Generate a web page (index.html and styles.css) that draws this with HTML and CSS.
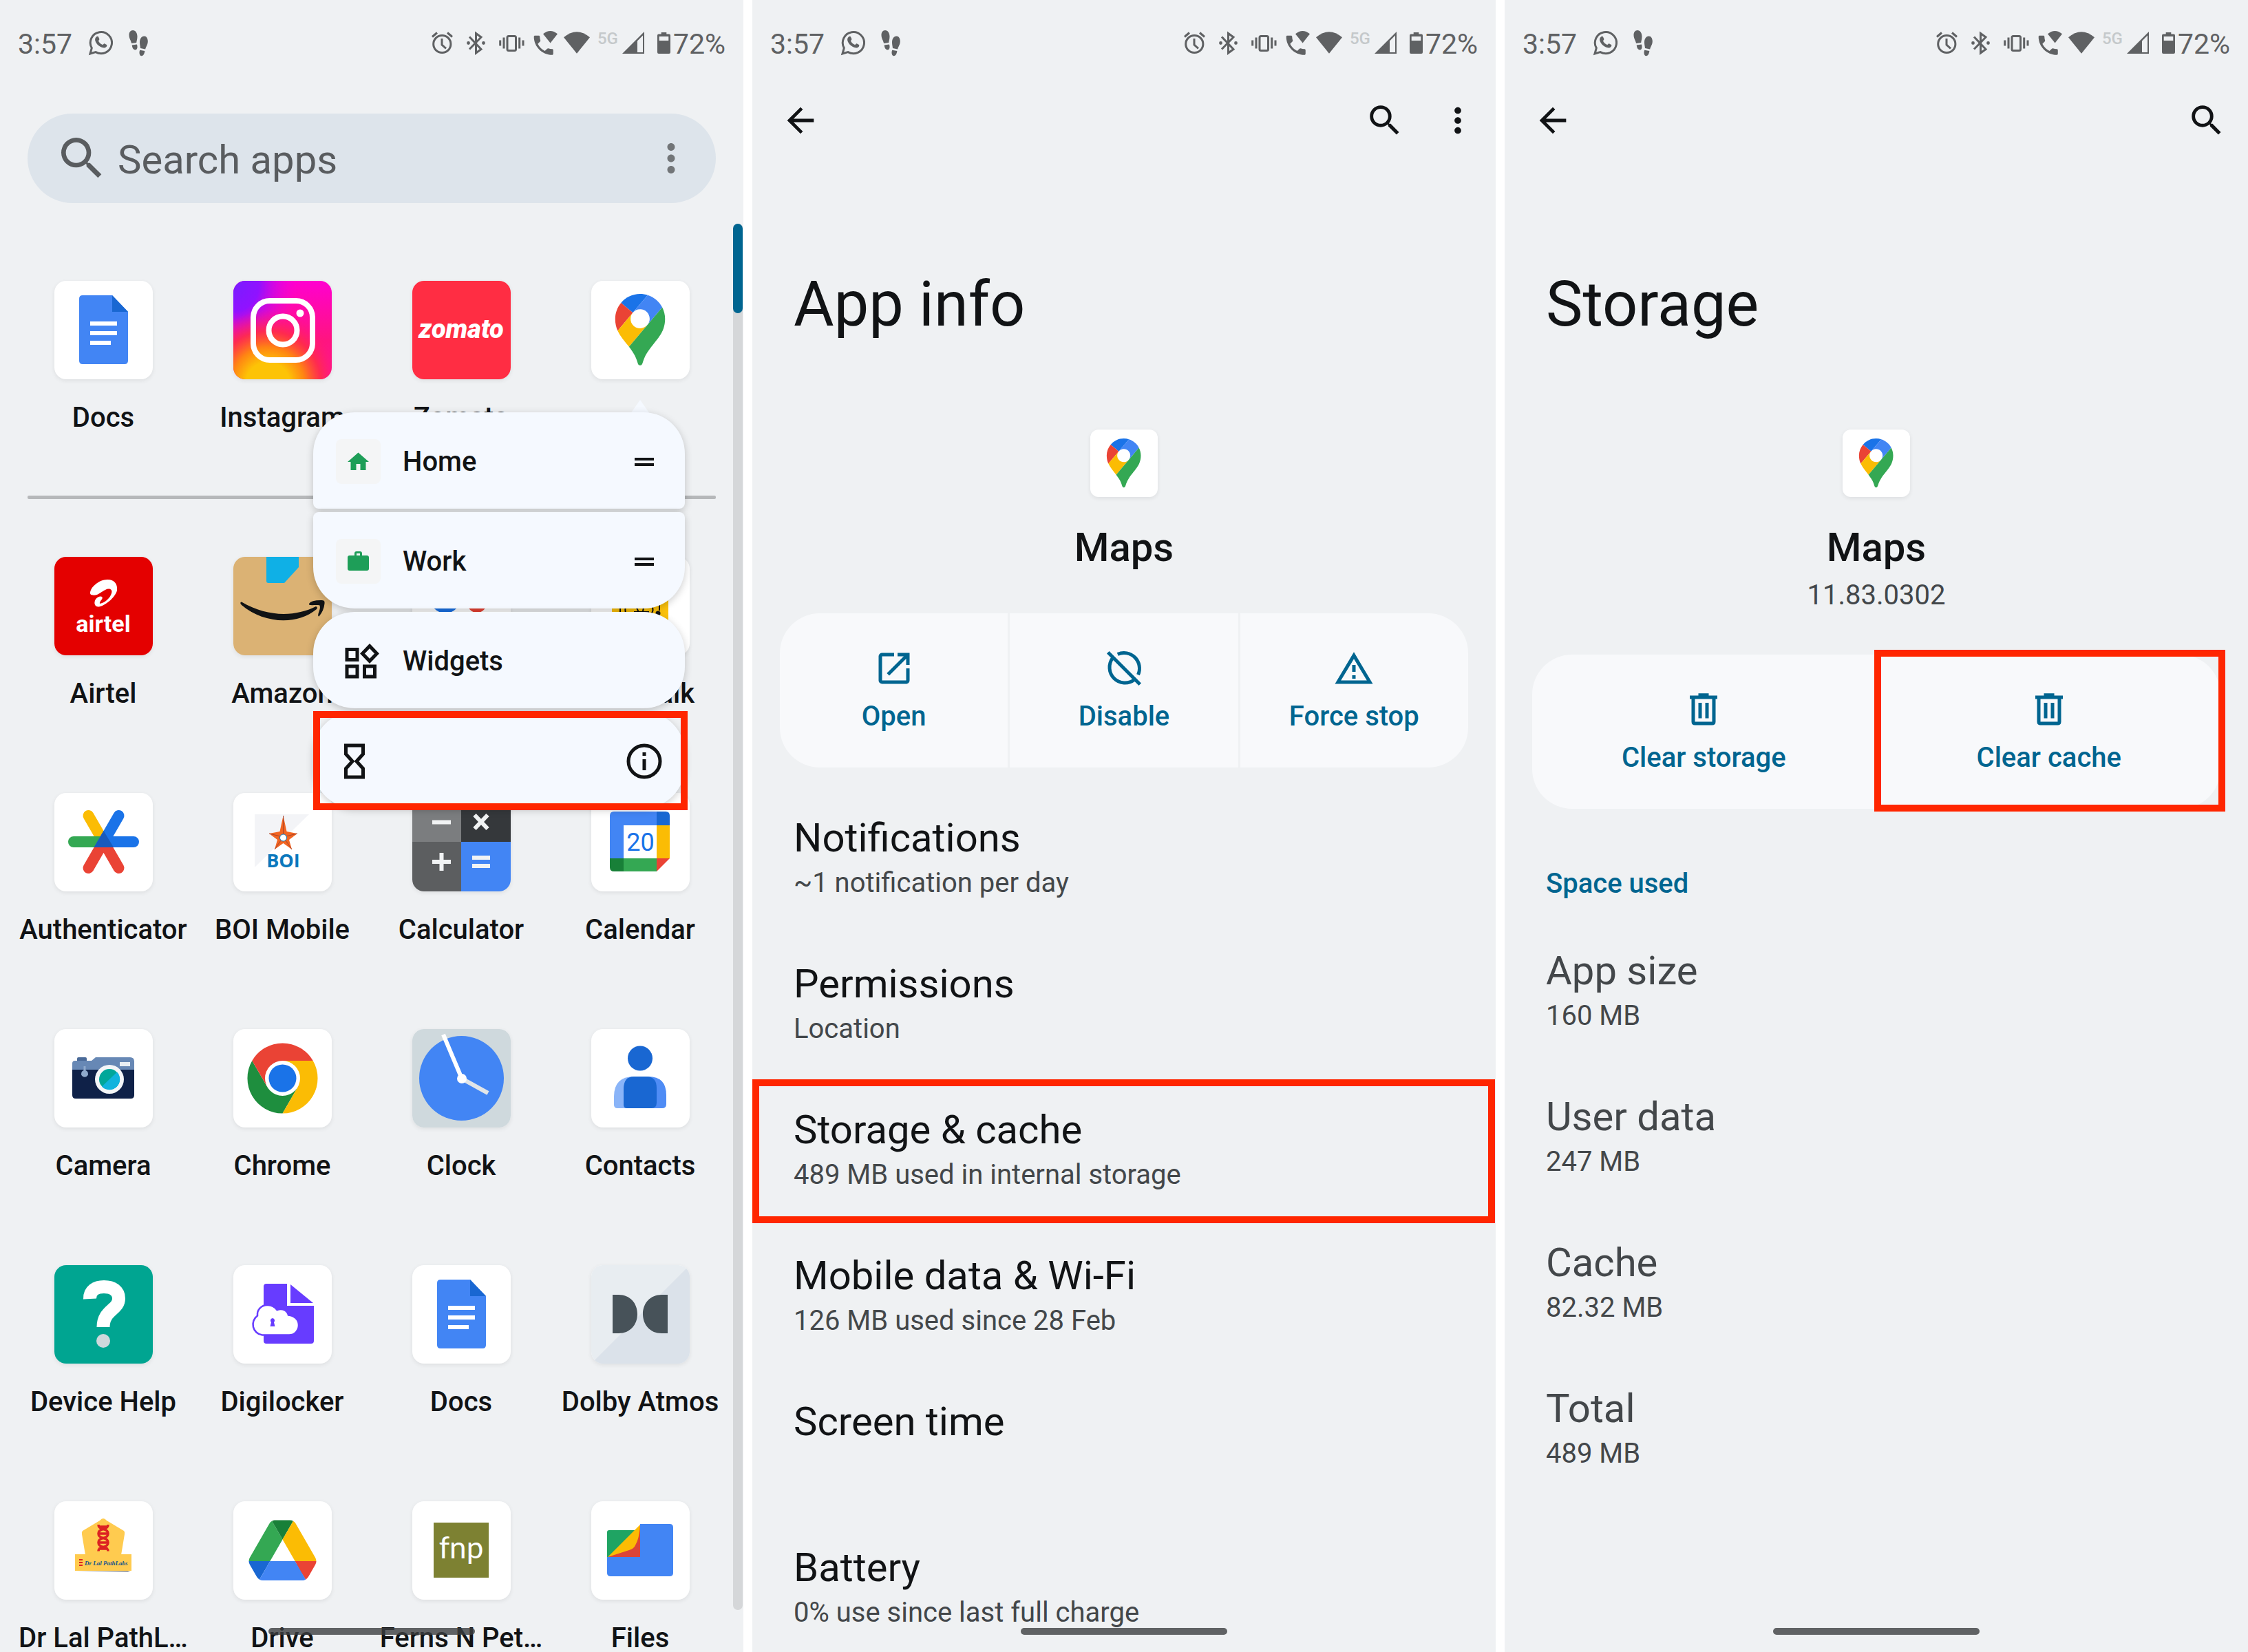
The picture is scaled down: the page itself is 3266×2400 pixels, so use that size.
FILE: index.html
```html
<!DOCTYPE html>
<html lang="en">
<head>
    <meta charset="utf-8">
    <title>Clear Maps cache</title>
    <meta name="viewport" content="width=device-width, initial-scale=1">
    <link rel="stylesheet" href="styles.css">
</head>

<body>

    <!-- shared icons -->
    <svg class="sprite" aria-hidden="true">
        <symbol id="whatsapp" viewBox="0 0 36 40">
            <path d="M3 36l2.3-8.2A15.6 15.6 0 1 1 11 33.6z" fill="none" stroke="#5f6163" stroke-width="3"/>
            <path d="M12 11.500c1-1 2.600-1 3.100.2l1.300 3c.3.8-1.600 2.400-1.300 3 1.400 2.600 3.200 4.200 5.800 5.300.8.3 2-2 2.800-1.700l3.200 1.600c.8.5.4 2.300-.6 3.300-2 2-5 1.600-8.700-.4-3.200-1.800-5.800-4.700-7-7.800-1-2.700-.4-5 1.400-6.500z" fill="#5f6163"/>
        </symbol>
        <symbol id="steps" viewBox="0 0 28 40">
            <g fill="#5f6163">
                <path d="M6 2c4 0 6.500 4 6.500 9 0 4-1 6-1.300 9L4 21C3.500 17 .5 14 .5 9 .5 5 2.500 2 6 2z"/>
                <path d="M4.800 23.500l7-1c1.500 3 .8 8-2.300 8s-4.700-4-4.700-7z"/>
                <path d="M22.500 10.500c-4 0-6.500 4-6.500 9 0 3 .7 5.500 1 8.500l7.200 1.500c.6-3.500 3.600-6.500 3.600-11.500 0-4-2-7.500-5.300-7.500z"/>
                <path d="M23.300 32l-7-1.300c-1.500 3-.9 8.300 2.200 8.500s4.700-4.200 4.800-7.200z"/>
            </g>
        </symbol>
        <symbol id="alarm" viewBox="0 0 44 40">
            <g fill="none" stroke="#5f6163" stroke-width="3">
                <circle cx="16.300" cy="22" r="12.600"/>
                <path d="M16 14v9l6 5.500M2 11.500l7-6M24 5.500l7 6"/>
            </g>
        </symbol>
        <symbol id="bluetooth" viewBox="0 0 39 40">
            <path d="M4 11.500l17 18-7.500 5.500V6.500l7.500 5.500L4 29.500" fill="none" stroke="#5f6163" stroke-width="3"/>
            <circle cx="2.500" cy="20.500" r="2.400" fill="#5f6163"/>
            <circle cx="24.500" cy="20.500" r="2.400" fill="#5f6163"/>
        </symbol>
        <symbol id="vibrate" viewBox="0 0 42 40">
            <path d="M1.700 16.500v8M7 12.500v16M29.700 12.500v16M35 16.500v8" stroke="#5f6163" stroke-width="3"/>
            <rect x="12" y="10.500" width="12.500" height="21" rx="2" fill="none" stroke="#5f6163" stroke-width="3"/>
        </symbol>
        <symbol id="wificall" viewBox="0 0 36 40">
            <path transform="translate(-4 5) scale(1.560)" d="M20 15.500c-1.250 0-2.450-.2-3.570-.57a1.020 1.020 0 0 0-1.020.24l-2.200 2.200a15.045 15.045 0 0 1-6.590-6.590l2.200-2.210c.28-.26.36-.65.25-1C8.700 6.450 8.500 5.250 8.500 4c0-.55-.45-1-1-1H4c-.55 0-1 .45-1 1 0 9.390 7.610 17 17 17 .55 0 1-.45 1-1v-3.500c0-.55-.45-1-1-1z" fill="#5f6163"/>
            <path d="M14 7.300q10.500-8.500 21 0L24.600 20.400z" fill="#5f6163"/>
        </symbol>
        <symbol id="wifi" viewBox="0 0 41 40">
            <path d="M0 12.300Q19-4 38 12.300L19 35.800z" fill="#5f6163"/>
        </symbol>
        <symbol id="signal" viewBox="0 0 43 40">
            <path d="M32 4v32H0zM30 9.500l-8 8V34h8z" fill="#5f6163" fill-rule="evenodd"/>
        </symbol>
        <symbol id="battery" viewBox="0 0 19 40">
            <path d="M5.700 5h7.600v2.500H17q2 0 2 2V34q0 2-2 2H2q-2 0-2-2V9.500q0-2 2-2h3.700zM2.700 11v6h13.600v-6z" fill="#5f6163" fill-rule="evenodd"/>
        </symbol>
        <symbol id="search" viewBox="0 0 24 24">
            <path d="M15.500 14h-.79l-.28-.27A6.470 6.470 0 0 0 16 9.500 6.500 6.500 0 1 0 9.500 16c1.610 0 3.090-.59 4.230-1.570l.27.28v.79l5 4.990L20.490 19l-4.990-5zm-6 0C7.010 14 5 11.990 5 9.500S7.010 5 9.500 5 14 7.010 14 9.500 11.990 14 9.500 14z" fill="currentColor"/>
        </symbol>
        <symbol id="dots" viewBox="0 0 24 24">
            <path d="M12 8c1.100 0 2-.9 2-2s-.9-2-2-2-2 .9-2 2 .9 2 2 2zm0 2c-1.100 0-2 .9-2 2s.9 2 2 2 2-.9 2-2-.9-2-2-2zm0 6c-1.100 0-2 .9-2 2s.9 2 2 2 2-.9 2-2-.9-2-2-2z" fill="currentColor"/>
        </symbol>
        <symbol id="back" viewBox="0 0 24 24">
            <path d="M20 11H7.830l5.590-5.590L12 4l-8 8 8 8 1.410-1.410L7.830 13H20v-2z" fill="currentColor"/>
        </symbol>
        <symbol id="trash" viewBox="0 0 24 24">
            <path d="M4 5V3.800h5V2.500h6v1.300h5V5.800h-1V19q0 2-2 2H7q-2 0-2-2V5.800H4zM7 5.800V19h10V5.800zM9 8h2v9H9zM13 8h2v9h-2z" fill="currentColor" fill-rule="evenodd"/>
        </symbol>
        <symbol id="maps" viewBox="0 0 143 143">
            <g transform="translate(34.800 19) scale(.784)">
                <path fill="#1a73e8" d="M60.200 2.200C55.800.8 51 0 46.100 0 32 0 19.300 6.400 10.800 16.500l21.800 18.300L60.200 2.200z"/>
                <path fill="#ea4335" d="M10.800 16.500C4.100 24.500 0 34.900 0 46.100c0 8.700 1.700 15.700 4.600 22l28-33.300-21.800-18.300z"/>
                <path fill="#4285f4" d="M46.200 28.500c9.800 0 17.700 7.900 17.700 17.700 0 4.300-1.600 8.300-4.200 11.400 0 0 13.900-16.600 27.500-32.700-5.600-10.800-15.300-19-27-22.700L32.600 34.800c3.300-3.800 8.100-6.300 13.600-6.300"/>
                <path fill="#fbbc04" d="M46.200 63.800c-9.800 0-17.700-7.900-17.700-17.700 0-4.300 1.500-8.300 4.100-11.300l-28 33.300c4.800 10.600 12.800 19.200 21 29.900l34.100-40.500c-3.300 3.900-8.100 6.300-13.500 6.300"/>
                <path fill="#34a853" d="M59.100 109.200c15.400-24.100 33.300-35 33.300-63 0-7.700-1.900-14.900-5.200-21.300L25.600 98c2.600 3.400 5.300 7.300 7.900 11.300 9.400 14.500 6.800 23.100 12.800 23.100s3.400-8.700 12.800-23.200"/>
            </g>
        </symbol>
        <symbol id="docs" viewBox="0 0 143 143">
            <path d="M41 21h43l23 24v71q0 5-5 5H41q-5 0-5-5V26q0-5 5-5z" fill="#4285f4"/>
            <path d="M84 21l23 24H84z" fill="#1967d2"/>
            <path d="M52 59h39v6H52zM52 73h39v6H52zM52 87h30v6H52z" fill="#fff"/>
        </symbol>
    </svg>

    <div class="screens">

        <!-- App drawer -->
        <section class="screen drawer">
            <div class="status">
                <span class="status-text">3:57</span>
                <svg width="36" height="40"><use href="#whatsapp"/></svg>
                <svg width="28" height="40"><use href="#steps"/></svg>
                <div class="status-right">
                    <svg width="44" height="40"><use href="#alarm"/></svg>
                    <svg width="39" height="40"><use href="#bluetooth"/></svg>
                    <svg width="42" height="40"><use href="#vibrate"/></svg>
                    <svg width="36" height="40"><use href="#wificall"/></svg>
                    <svg width="41" height="40"><use href="#wifi"/></svg>
                    <span class="net">5G</span>
                    <svg width="43" height="40"><use href="#signal"/></svg>
                    <span class="power"><svg width="19" height="40"><use href="#battery"/></svg><span class="status-text">72%</span></span>
                </div>
            </div>

            <form class="search">
                <label for="q"><svg class="search-icon"><use href="#search"/></svg></label>
                <input type="text" id="q" name="q" placeholder="Search apps">
                <button type="button" aria-label="More options"><svg class="more-icon"><use href="#dots"/></svg></button>
            </form>

            <div class="apps">
                <a class="app" href="#">
                    <svg class="tile" viewBox="0 0 143 143"><use href="#docs"/></svg>
                    <span>Docs</span>
                </a>
                <a class="app" href="#">
                    <svg class="tile" viewBox="0 0 143 143">
                        <defs>
                            <linearGradient id="ig1" x1="0" y1="0" x2="0" y2="1">
                                <stop offset="0" stop-color="#ff00d0"/>
                                <stop offset=".6" stop-color="#ff1480"/>
                                <stop offset="1" stop-color="#ff1595"/>
                            </linearGradient>
                            <radialGradient id="ig2" cx=".35" cy="1.050" r=".75">
                                <stop offset=".3" stop-color="#fdc306"/>
                                <stop offset=".5" stop-color="#ff8413"/>
                                <stop offset=".72" stop-color="#ff3040" stop-opacity=".8"/>
                                <stop offset="1" stop-color="#ff1480" stop-opacity="0"/>
                            </radialGradient>
                            <radialGradient id="ig3" cx="0" cy=".05" r=".65">
                                <stop offset="0" stop-color="#7a1cff"/>
                                <stop offset=".4" stop-color="#9012ff"/>
                                <stop offset="1" stop-color="#f000e0" stop-opacity="0"/>
                            </radialGradient>
                        </defs>
                        <rect width="143" height="143" fill="url(#ig1)"/>
                        <rect width="143" height="143" fill="url(#ig3)"/>
                        <rect width="143" height="143" fill="url(#ig2)"/>
                        <g fill="none" stroke="#fff" stroke-width="8">
                            <rect x="29" y="29" width="86" height="86" rx="24"/>
                            <circle cx="72" cy="72" r="20.500"/>
                        </g>
                        <circle cx="97" cy="47" r="5.500" fill="#fff"/>
                    </svg>
                    <span>Instagram</span>
                </a>
                <a class="app" href="#">
                    <svg class="tile" viewBox="0 0 143 143">
                        <rect width="143" height="143" fill="#ff2d43"/>
                        <text x="71" y="83" text-anchor="middle" class="zomato-text">zomato</text>
                    </svg>
                    <span>Zomato</span>
                </a>
                <div class="app">
                    <svg class="tile" viewBox="0 0 143 143" role="img" aria-label="Maps"><use href="#maps"/></svg>

                    <!-- long press menu -->
                    <div class="popup">
                        <button type="button" class="first">
                            <svg class="chip" viewBox="0 0 65 65">
                                <path d="M32.500 19.500L48 33h-4.500v12h-8v-9h-6v9h-8V33H17z" fill="#1e9e58"/>
                            </svg>
                            <span>Home</span>
                            <svg class="handle" viewBox="0 0 28 12"><path d="M0 2h28M0 10h28" stroke="#111315" stroke-width="4"/></svg>
                        </button>
                        <button type="button" class="second">
                            <svg class="chip" viewBox="0 0 65 65">
                                <path d="M20 24h7v-3q0-3 3-3h5q3 0 3 3v3h7q3 0 3 3v16q0 3-3 3H20q-3 0-3-3V27q0-3 3-3zm10 0h5v-3h-5z" fill="#1e9e58" fill-rule="evenodd"/>
                            </svg>
                            <span>Work</span>
                            <svg class="handle" viewBox="0 0 28 12"><path d="M0 2h28M0 10h28" stroke="#111315" stroke-width="4"/></svg>
                        </button>
                        <button type="button">
                            <svg class="plain" viewBox="0 0 65 65">
                                <path d="M16 15.500h15v15H16zM16 40h15v15H16zM41.500 40h15v15h-15z M49 10.500l10.500 11L49 32.500 38.500 21.500z" fill="none" stroke="#111315" stroke-width="5"/>
                            </svg>
                            <span>Widgets</span>
                        </button>
                        <button type="button" aria-label="App info">
                            <svg class="plain" viewBox="0 0 65 65">
                                <path d="M14.500 10h25v12.500L30 33l9.500 10.500V56h-25V43.500L24 33l-9.500-10.500z" fill="none" stroke="#111315" stroke-width="5"/>
                            </svg>
                            <svg class="info" viewBox="0 0 52 52">
                                <circle cx="26" cy="26" r="23" fill="none" stroke="#111315" stroke-width="5"/>
                                <path d="M26 13v5M26 23v16" stroke="#111315" stroke-width="5"/>
                            </svg>
                            <span class="mark"></span>
                        </button>
                    </div>
                </div>
            </div>

            <hr>

            <div class="apps">
                <a class="app" href="#">
                    <svg class="tile" viewBox="0 0 143 143">
                        <rect width="143" height="143" fill="#e40000"/>
                        <path d="M52 53C52 44 65 33 77 33c11 0 15 7 14 16C88 60 73 71 65 72.500c-7 .5-8-6-5-11 3-4 8-5 9.500-3 1.500 3-4.500 6-3.500 9.500C73 67 81 60 83 53c2-6-3-8-9-5S62 57 56 55.500C53 55.500 52 54 52 53z" fill="#fff"/>
                        <text x="71" y="109" text-anchor="middle" class="airtel-text">airtel</text>
                    </svg>
                    <span>Airtel</span>
                </a>
                <a class="app" href="#">
                    <svg class="tile" viewBox="0 0 143 143">
                        <rect width="143" height="143" fill="#dbb274"/>
                        <path d="M48 0h47v15L74 38H51q-3 0-3-3z" fill="#0fb0e6"/>
                        <path d="M10.500 66Q9.500 68 12 70c32 27 80 30 109 6q2-3-1-4C90 87 50 88 12 65.500z" fill="#111315"/>
                        <path d="M110 68q3-5 17-5c5 0 6 1 5.500 5q-1 10-8 18.500-2 0-1-4c2-6 3-8 2-12-4-1-9 0-15-.5z" fill="#111315"/>
                    </svg>
                    <span>Amazon</span>
                </a>
                <a class="app" href="#">
                    <svg class="tile" viewBox="0 0 143 143">
                        <circle cx="48" cy="60" r="22" fill="#1a73e8"/>
                        <circle cx="94" cy="67" r="14" fill="#ea4335"/>
                    </svg>
                    <span>Assistant</span>
                </a>
                <a class="app" href="#">
                    <svg class="tile" viewBox="0 0 143 143">
                        <rect x="30" y="30" width="82" height="82" fill="#fcc20c"/>
                        <path d="M42 73v10M50 73q-2 6 2 12M62 80h22M66 74l4 9M76 74l-2 10M88 72q4 6-2 12M99 70v8" stroke="#111315" stroke-width="2" fill="none"/>
                        <circle cx="97" cy="82" r="3.500" fill="#111315"/>
                    </svg>
                    <span>Cat Walk</span>
                </a>

                <a class="app" href="#">
                    <svg class="tile" viewBox="0 0 143 143">
                        <g stroke-width="16" stroke-linecap="round">
                            <path d="M71.500 71l-22 38M71.500 71l22 38" stroke="#ea4335"/>
                            <path d="M49.500 33l22 38" stroke="#fbbc04"/>
                            <path d="M28 71h43.500" stroke="#34a853"/>
                            <path d="M93.500 33l-22 38H115" stroke="#1a73e8" fill="none"/>
                        </g>
                        <path d="M71.500 55L86 79H57.500z" fill="#185abc"/>
                    </svg>
                    <span>Authenticator</span>
                </a>
                <a class="app" href="#">
                    <svg class="tile" viewBox="0 0 143 143">
                        <path d="M31 31h79L31 108z" fill="#f3f4f7"/>
                        <path d="M72.500 33l5 23 15.500 3-12 9 4 14-12.500-9L60 82l4-14-12-9 15.500-3z" fill="#f26522"/>
                        <path d="M72.500 33v31L52 59m20.500 5L60 82m12.500-18L85 82M72.500 64L93 59" stroke="#a8432a" stroke-width="1" fill="none"/>
                        <circle cx="72.500" cy="65" r="5" fill="#fff" stroke="#0b78bd"/>
                        <text x="72.500" y="108" text-anchor="middle" class="boi-text">BOI</text>
                    </svg>
                    <span>BOI Mobile</span>
                </a>
                <a class="app" href="#">
                    <svg class="tile" viewBox="0 0 143 143">
                        <rect width="71" height="71" fill="#7b7d7f"/>
                        <rect x="71" width="72" height="71" fill="#35383b"/>
                        <rect y="71" width="71" height="72" fill="#5c5e60"/>
                        <rect x="71" y="71" width="72" height="72" fill="#4285f4"/>
                        <path d="M29 42.500h27M29 100h27M42.500 87v26M87 94h26M87 106h26M90.500 32l19 20M109.500 32l-19 20" stroke="#f1f3f4" stroke-width="6"/>
                    </svg>
                    <span>Calculator</span>
                </a>
                <a class="app" href="#">
                    <svg class="tile" viewBox="0 0 143 143">
                        <path d="M33 27h62v20H47v48H27V33q0-6 6-6z" fill="#4285f4"/>
                        <path d="M95 27h13q6 0 6 6v14H95z" fill="#1967d2"/>
                        <path d="M95 47h19v48H95z" fill="#fbbc04"/>
                        <path d="M47 95h48v19H47z" fill="#34a853"/>
                        <path d="M27 95h20v19H33q-6 0-6-6z" fill="#188038"/>
                        <path d="M95 95h19l-19 19z" fill="#ea4335"/>
                        <text x="71.500" y="84" text-anchor="middle" class="cal-text">20</text>
                    </svg>
                    <span>Calendar</span>
                </a>

                <a class="app" href="#">
                    <svg class="tile" viewBox="0 0 143 143">
                        <path d="M33 46v-3q0-2 2-2h10q2 0 2 2v3z" fill="#4a6a98"/>
                        <path d="M30 46h24l6-5h50q6 0 6 6v14H26V50q0-4 4-4z" fill="#6788b5"/>
                        <path d="M26 59h90v37q0 5-5 5H31q-5 0-5-5z" fill="#0f2148"/>
                        <rect x="95" y="48" width="15" height="6" fill="#e8eef4"/>
                        <path d="M42.500 54h3v6a5 5 0 1 1-3 0z" fill="#8fa9cc"/>
                        <circle cx="80" cy="73" r="21" fill="#f4f6f8"/>
                        <circle cx="80" cy="73" r="15" fill="#00a79a"/>
                        <path d="M91 62.500a15 15 0 0 1-22 21z" fill="#10b3dd"/>
                    </svg>
                    <span>Camera</span>
                </a>
                <a class="app" href="#">
                    <svg class="tile" viewBox="0 0 143 143">
                        <path d="M27.300 46A51 51 0 0 0 71.500 122.500L93.600 84.200 49.400 84.200z" fill="#1e8e3e"/>
                        <path d="M71.500 46h44.200A51 51 0 0 1 71.500 122.500L93.600 84.200z" fill="#fbbc04"/>
                        <path d="M27.300 46A51 51 0 0 1 115.700 46H71.500L49.400 84.200z" fill="#ea4335"/>
                        <circle cx="71.500" cy="71.500" r="25.500" fill="#fff"/>
                        <circle cx="71.500" cy="71.500" r="20" fill="#1a73e8"/>
                    </svg>
                    <span>Chrome</span>
                </a>
                <a class="app" href="#">
                    <svg class="tile" viewBox="0 0 143 143">
                        <rect width="143" height="143" fill="#cfd9dd"/>
                        <circle cx="71.500" cy="71.500" r="61.500" fill="#4285f4"/>
                        <path d="M72 72l38 21" stroke="#e1e5e8" stroke-width="6"/>
                        <path d="M72 72L45 8" stroke="#fff" stroke-width="6"/>
                        <circle cx="72" cy="72" r="7" fill="#fff"/>
                    </svg>
                    <span>Clock</span>
                </a>
                <a class="app" href="#">
                    <svg class="tile" viewBox="0 0 143 143">
                        <path d="M62 69h10v46H38q-5 0-5-5V98q0-29 29-29z" fill="#8ab4f8"/>
                        <path d="M72 69h11q26 0 26 27v13q0 6-6 6H72z" fill="#4f8cf5"/>
                        <path d="M62 69h18q15 0 15 17v21q0 8-8 8H52q-5 0-5-5V87q0-18 15-18z" fill="#1967d2"/>
                        <circle cx="71" cy="42.500" r="18" fill="#1967d2"/>
                    </svg>
                    <span>Contacts</span>
                </a>

                <a class="app" href="#">
                    <svg class="tile" viewBox="0 0 143 143">
                        <rect width="143" height="143" fill="#00a591"/>
                        <path d="M51.500 49C51 37 60 31.500 72 31.500c13 0 21.500 6 21.500 17C93.500 65 71 65 71 90" fill="none" stroke="#fff" stroke-width="19"/>
                        <circle cx="71" cy="110" r="10" fill="#cfd8dc"/>
                    </svg>
                    <span>Device Help</span>
                </a>
                <a class="app" href="#">
                    <svg class="tile" viewBox="0 0 143 143">
                        <path d="M48 27h30v32h39v51q0 4-4 4H48q-4 0-4-4V31q0-4 4-4z" fill="#673cff"/>
                        <path d="M83 28l33 27H83z" fill="#673cff"/>
                        <path d="M42 101.500a15.500 15.500 0 0 1-7-28C34 64 42 57 50.500 58c6 0 10 3 13 7 8-3 15 1 16.500 7.500C88 73 95 79 95 87c0 8-6 14.500-14 14.500z" fill="#fff" stroke="#673cff" stroke-width="2.500"/>
                        <path d="M57 77a3.500 3.500 0 0 1 2 6l1.500 6h-7l1.500-6a3.500 3.500 0 0 1 2-6z" fill="#673cff"/>
                    </svg>
                    <span>Digilocker</span>
                </a>
                <a class="app" href="#">
                    <svg class="tile" viewBox="0 0 143 143"><use href="#docs"/></svg>
                    <span>Docs</span>
                </a>
                <a class="app" href="#">
                    <svg class="tile" viewBox="0 0 143 143">
                        <rect width="143" height="143" fill="#e8edf1"/>
                        <path d="M143 0v143H0z" fill="#dbe2ea"/>
                        <path d="M31 43h9c16 0 27 12 27 28s-11 28-27 28h-9zM111 43h-9c-16 0-27 12-27 28s11 28 27 28h9z" fill="#475259"/>
                    </svg>
                    <span>Dolby Atmos</span>
                </a>

                <a class="app" href="#">
                    <svg class="tile" viewBox="0 0 143 143">
                        <path d="M66 28q5-6 10 0l25 15q2 2 1 5l-5 30H45l-5-30q-1-3 1-5z" fill="#ffcb4f"/>
                        <path d="M31 101l8-2h64l7 4z" fill="#9c9fa2"/>
                        <rect x="30" y="77" width="82" height="24" fill="#ffcb4f"/>
                        <path d="M64 34q0 5 7 6.500t7 6.500-7 6.500-7 6.500 7 6.500 7 6M78 34q0 5-7 6.500T64 47t7 6.500 7 6.500-7 6.500-7 6M64 37h14M64 47h14M64 60h14M64 69h14" fill="none" stroke="#dc2222" stroke-width="3.500"/>
                        <path d="M36 85h5M36 89h5M36 93h5" stroke="#dc2222" stroke-width="2"/>
                        <text x="44" y="93" class="lal-text">Dr Lal PathLabs</text>
                    </svg>
                    <span>Dr Lal PathL…</span>
                </a>
                <a class="app" href="#">
                    <svg class="tile" viewBox="0 0 143 143">
                        <g transform="translate(22.500 27.500) scale(1.123)">
                            <path d="M6.600 66.850l3.850 6.650c.8 1.400 1.950 2.500 3.300 3.300l13.750-23.800H0c0 1.550.4 3.100 1.200 4.500z" fill="#1967d2"/>
                            <path d="M43.650 25L29.900 1.200c-1.350.8-2.500 1.900-3.300 3.300L1.200 48.500A9.060 9.060 0 0 0 0 53h27.500z" fill="#34a853"/>
                            <path d="M73.550 76.800c1.350-.8 2.500-1.900 3.300-3.300l1.600-2.750 7.650-13.250c.8-1.400 1.200-2.950 1.200-4.500H59.800l5.850 11.500z" fill="#ea4335"/>
                            <path d="M43.650 25L57.400 1.200C56.050.4 54.500 0 52.900 0H34.400c-1.600 0-3.150.45-4.500 1.200z" fill="#188038"/>
                            <path d="M59.800 53H27.500L13.750 76.800c1.350.8 2.900 1.200 4.500 1.200h50.800c1.600 0 3.150-.45 4.500-1.200z" fill="#4285f4"/>
                            <path d="M73.400 26.500L60.700 4.500c-.8-1.400-1.950-2.500-3.300-3.300L43.650 25 59.800 53h27.450c0-1.550-.4-3.100-1.200-4.500z" fill="#fbbc04"/>
                        </g>
                    </svg>
                    <span>Drive</span>
                </a>
                <a class="app" href="#">
                    <svg class="tile" viewBox="0 0 143 143">
                        <rect x="31" y="31" width="80" height="80" fill="#7d8132"/>
                        <text x="71" y="83" text-anchor="middle" class="fnp-text">fnp</text>
                    </svg>
                    <span>Ferns N Pet…</span>
                </a>
                <a class="app" href="#">
                    <svg class="tile" viewBox="0 0 143 143">
                        <path d="M26 42h45v40H23V45q0-3 3-3z" fill="#1fa463"/>
                        <path d="M71 33h43q5 0 5 5v66q0 5-5 5H28q-5 0-5-5V81h48z" fill="#4285f4"/>
                        <path d="M71 34v47H24l34-14z" fill="#db4437"/>
                        <path d="M71 34q-1 20-7 30-2 5-9 7L24 81z" fill="#fbbc04"/>
                    </svg>
                    <span>Files</span>
                </a>
            </div>

            <div class="scrollbar"><div class="thumb"></div></div>
            <div class="nav-pill"></div>
        </section>

        <!-- App info -->
        <section class="screen">
            <div class="status">
                <span class="status-text">3:57</span>
                <svg width="36" height="40"><use href="#whatsapp"/></svg>
                <svg width="28" height="40"><use href="#steps"/></svg>
                <div class="status-right">
                    <svg width="44" height="40"><use href="#alarm"/></svg>
                    <svg width="39" height="40"><use href="#bluetooth"/></svg>
                    <svg width="42" height="40"><use href="#vibrate"/></svg>
                    <svg width="36" height="40"><use href="#wificall"/></svg>
                    <svg width="41" height="40"><use href="#wifi"/></svg>
                    <span class="net">5G</span>
                    <svg width="43" height="40"><use href="#signal"/></svg>
                    <span class="power"><svg width="19" height="40"><use href="#battery"/></svg><span class="status-text">72%</span></span>
                </div>
            </div>

            <div class="toolbar">
                <button type="button" aria-label="Back"><svg><use href="#back"/></svg></button>
                <button type="button" aria-label="Search" class="push"><svg><use href="#search"/></svg></button>
                <button type="button" aria-label="More options"><svg><use href="#dots"/></svg></button>
            </div>

            <h1>App info</h1>

            <div class="app-head">
                <svg class="app-icon"><use href="#maps"/></svg>
                <h2>Maps</h2>
            </div>

            <div class="actions">
                <button type="button">
                    <svg viewBox="0 0 24 24"><path d="M19 19H5V5h7V3H5a2 2 0 0 0-2 2v14a2 2 0 0 0 2 2h14c1.100 0 2-.9 2-2v-7h-2v7zM14 3v2h3.590l-9.830 9.830 1.410 1.410L19 6.410V10h2V3h-7z" fill="currentColor"/></svg>
                    Open
                </button>
                <button type="button">
                    <svg viewBox="0 0 24 24"><path d="M8.300 3.800A9 9 0 0 1 20.200 15.700M18 18.600A9 9 0 0 1 5.400 6M2.700 2.700l18.600 18.600" fill="none" stroke="currentColor" stroke-width="2"/></svg>
                    Disable
                </button>
                <button type="button">
                    <svg viewBox="0 0 24 24"><path d="M12 6.490L19.530 19H4.470L12 6.490M12 2.500L1 21h22L12 2.500zM13 16h-2v2h2v-2zm0-6h-2v4h2v-4z" fill="currentColor"/></svg>
                    Force stop
                </button>
            </div>

            <ul class="list">
                <li><h3>Notifications</h3><p>~1 notification per day</p></li>
                <li><h3>Permissions</h3><p>Location</p></li>
                <li><h3>Storage &amp; cache</h3><p>489 MB used in internal storage</p><span class="mark"></span></li>
                <li><h3>Mobile data &amp; Wi-Fi</h3><p>126 MB used since 28 Feb</p></li>
                <li><h3>Screen time</h3></li>
                <li><h3>Battery</h3><p>0% use since last full charge</p></li>
            </ul>

            <div class="nav-pill"></div>
        </section>

        <!-- Storage -->
        <section class="screen">
            <div class="status">
                <span class="status-text">3:57</span>
                <svg width="36" height="40"><use href="#whatsapp"/></svg>
                <svg width="28" height="40"><use href="#steps"/></svg>
                <div class="status-right">
                    <svg width="44" height="40"><use href="#alarm"/></svg>
                    <svg width="39" height="40"><use href="#bluetooth"/></svg>
                    <svg width="42" height="40"><use href="#vibrate"/></svg>
                    <svg width="36" height="40"><use href="#wificall"/></svg>
                    <svg width="41" height="40"><use href="#wifi"/></svg>
                    <span class="net">5G</span>
                    <svg width="43" height="40"><use href="#signal"/></svg>
                    <span class="power"><svg width="19" height="40"><use href="#battery"/></svg><span class="status-text">72%</span></span>
                </div>
            </div>

            <div class="toolbar">
                <button type="button" aria-label="Back"><svg><use href="#back"/></svg></button>
                <button type="button" aria-label="Search" class="push"><svg><use href="#search"/></svg></button>
            </div>

            <h1>Storage</h1>

            <div class="app-head">
                <svg class="app-icon"><use href="#maps"/></svg>
                <h2>Maps</h2>
                <p>11.83.0302</p>
            </div>

            <div class="actions">
                <button type="button"><svg><use href="#trash"/></svg>Clear storage</button>
                <button type="button"><svg><use href="#trash"/></svg>Clear cache<span class="mark"></span></button>
            </div>

            <h4>Space used</h4>
            <ul class="list muted">
                <li><h3>App size</h3><p>160 MB</p></li>
                <li><h3>User data</h3><p>247 MB</p></li>
                <li><h3>Cache</h3><p>82.32 MB</p></li>
                <li><h3>Total</h3><p>489 MB</p></li>
            </ul>

            <div class="nav-pill"></div>
        </section>

    </div>
</body>
</html>
```

FILE: styles.css
```css
* {
    box-sizing: border-box;
    margin: 0;
    padding: 0;
}

body {
    background-color: #ffffff;
    font-family: Roboto, "Liberation Sans", sans-serif;
    font-size: 40px;
    line-height: 48px;
    color: #111315;
}

button {
    font: inherit;
    color: inherit;
    background: none;
    border: none;
    cursor: pointer;
}

svg {
    display: block;
    flex: none;
}

.sprite {
    position: absolute;
    width: 0;
    height: 0;
}

.screens {
    display: flex;
    gap: 13px;
    height: 100vh;
}

.screen {
    flex: 1;
    min-width: 0;
    position: relative;
    overflow: hidden;
    background-color: #eff1f3;
}

/* red highlight box */
.mark {
    position: absolute;
    border: 10px solid #ff2600;
    pointer-events: none;
}

/* status bar */
.status {
    display: flex;
    align-items: flex-start;
    gap: 23px;
    padding: 42px 26px 41px 26px;
    color: #5f6163;
}

.status-text {
    font-size: 41px;
    line-height: 44px;
}

.status-right {
    display: flex;
    align-items: flex-start;
    gap: 8px;
    margin-left: auto;
}

.power {
    display: flex;
    gap: 4px;
}

.net {
    width: 28px;
    font-size: 24px;
    line-height: 28px;
    font-weight: 500;
    color: #c5c9cb;
}

.nav-pill {
    position: absolute;
    bottom: 25px;
    left: 50%;
    width: 300px;
    height: 10px;
    margin-left: -150px;
    border-radius: 5px;
    background-color: rgba(60, 62, 64, 0.8);
}

/* app drawer */
.search {
    display: flex;
    align-items: center;
    height: 130px;
    margin: 38px 40px 113px;
    padding: 0 32px 0 39px;
    border-radius: 65px;
    background-color: #dde4eb;
    color: #595c5f;
}

.search-icon {
    width: 80px;
    height: 80px;
}

.search input {
    flex: 1;
    min-width: 0;
    margin-left: 12px;
    padding-top: 3px;
    border: none;
    outline: none;
    background: none;
    font: inherit;
    font-size: 58px;
    line-height: 68px;
    color: inherit;
}

.search input::placeholder {
    color: #595c5f;
    opacity: 1;
}

.more-icon {
    width: 66px;
    height: 66px;
    color: #727578;
}

.apps {
    display: grid;
    grid-template-columns: repeat(4, 1fr);
    row-gap: 124px;
    padding: 0 20px;
}

.app {
    position: relative;
    display: flex;
    flex-direction: column;
    align-items: center;
    gap: 36px;
    line-height: 40px;
    font-weight: 500;
    color: #111315;
    text-decoration: none;
    white-space: nowrap;
}

.tile {
    width: 143px;
    height: 143px;
    border-radius: 17px;
    background-color: #ffffff;
    box-shadow: 0 2px 6px rgba(0, 0, 0, 0.08);
}

hr {
    height: 5px;
    margin: 93px 40px 84px;
    border: none;
    border-radius: 2px;
    background-color: #b6b8ba;
}

.zomato-text {
    font: italic 900 38px Roboto, sans-serif;
    fill: #ffffff;
}

.airtel-text {
    font: bold 34px Roboto, sans-serif;
    fill: #ffffff;
}

.boi-text {
    font: bold 27px "Open Sans", sans-serif;
    fill: #0b78bd;
}

.cal-text {
    font: 36px Roboto, sans-serif;
    fill: #1a73e8;
}

.lal-text {
    font: italic bold 9px "Liberation Serif", serif;
    fill: #17558c;
}

.fnp-text {
    font: 44px Lato, sans-serif;
    fill: #ffffff;
}

.scrollbar {
    position: absolute;
    top: 325px;
    right: 1px;
    bottom: 61px;
    width: 14px;
    border-radius: 7px;
    background-color: #d5d7d9;
}

.thumb {
    height: 130px;
    border-radius: 7px;
    background-color: #006590;
}

/* long press menu */
.popup {
    position: absolute;
    z-index: 1;
    top: 191px;
    right: 65px;
    width: 540px;
    display: flex;
    flex-direction: column;
    gap: 5px;
}

.popup::before {
    content: "";
    position: absolute;
    top: -18px;
    right: 51px;
    width: 28px;
    height: 20px;
    background-color: #f5f9ff;
    clip-path: polygon(50% 0, 100% 100%, 0 100%);
}

.popup button {
    position: relative;
    display: flex;
    align-items: center;
    gap: 32px;
    height: 140px;
    padding: 3px 33px 0;
    border-radius: 60px;
    background-color: #f5f9ff;
    box-shadow: 0 3px 12px rgba(0, 0, 0, 0.2);
    font-weight: 500;
}

.popup .first {
    border-radius: 60px 60px 8px 8px;
}

.popup .second {
    border-radius: 8px 8px 60px 60px;
}

.chip,
.plain {
    width: 65px;
    height: 65px;
    border-radius: 8px;
}

.chip {
    background-color: #f4f5f6;
}

.handle {
    width: 28px;
    height: 12px;
    margin-left: auto;
    margin-right: 12px;
}

.info {
    width: 52px;
    height: 52px;
    margin-left: auto;
}

.popup .mark {
    inset: -1px -4px -3px 0;
}

/* settings screens */
.toolbar {
    display: flex;
    align-items: center;
    gap: 48px;
    height: 96px;
    padding: 0 26px 0 41px;
}

.toolbar svg {
    width: 58px;
    height: 58px;
}

.toolbar .push {
    margin-left: auto;
}

.toolbar .push:last-child {
    margin-right: 5px;
}

h1 {
    margin: 168px 60px 129px;
    font-size: 90px;
    line-height: 104px;
    font-weight: 400;
}

.app-head {
    display: flex;
    flex-direction: column;
    align-items: center;
    margin-bottom: 62px;
}

.app-icon {
    width: 98px;
    height: 98px;
    border-radius: 12px;
    background-color: #ffffff;
    box-shadow: 0 2px 6px rgba(0, 0, 0, 0.08);
}

h2 {
    margin-top: 39px;
    font-size: 58px;
    line-height: 68px;
    font-weight: 500;
}

.app-head p {
    margin-top: 12px;
    color: #43474a;
}

.actions {
    display: flex;
    gap: 3px;
    height: 224px;
    margin: 0 40px;
}

.actions button {
    position: relative;
    flex: 1;
    display: flex;
    flex-direction: column;
    align-items: center;
    gap: 16px;
    padding-top: 50px;
    background-color: #f8f9fb;
    color: #006590;
    font-weight: 500;
}

.actions button:first-child {
    border-radius: 58px 0 0 58px;
}

.actions button:last-child {
    border-radius: 0 58px 58px 0;
}

.actions svg {
    width: 60px;
    height: 60px;
}

.actions .mark {
    inset: -7px -7px -4px -5px;
}

.list {
    margin-top: 24px;
    list-style: none;
}

.list li {
    position: relative;
    min-height: 212px;
    padding: 44px 60px;
}

.list h3 {
    margin-bottom: 8px;
    font-size: 58px;
    line-height: 68px;
    font-weight: 400;
}

.list p,
.muted h3 {
    color: #43474a;
}

.list .mark {
    inset: 5px 1px -2px 0;
}

h4 {
    margin: 85px 60px 24px;
    color: #006590;
    font-size: 40px;
    font-weight: 500;
}

.muted {
    margin-top: 0;
}
```
